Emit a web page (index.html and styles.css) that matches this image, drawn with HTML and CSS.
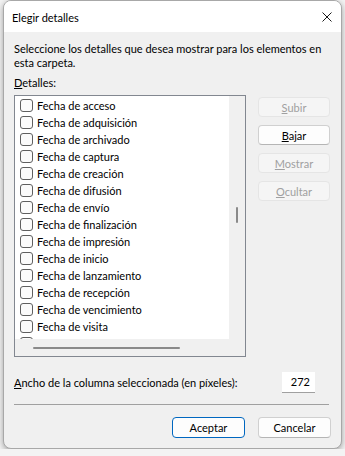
FILE: index.html
```html
<!DOCTYPE html>
<html lang="es">
<head>
    <meta charset="UTF-8">
    <title>Elegir detalles</title>
    <link rel="stylesheet" href="styles.css">
</head>
<body>
    <div class="window">
        <div class="titlebar">
            <span class="title">Elegir detalles</span>
            <span class="close">
                <svg width="10" height="10" viewBox="0 0 10 10">
                    <path d="M0.5 0.5 L9.5 9.5 M9.5 0.5 L0.5 9.5" stroke="#1a1a1a" stroke-width="1" fill="none"/>
                </svg>
            </span>
        </div>

        <div class="content">
            <p class="intro">Seleccione los detalles que desea mostrar para los elementos en esta carpeta.</p>
            <div class="label"><u>D</u>etalles:</div>

            <div class="main">
                <div class="listbox">
                    <div class="items-area">
                        <ul class="items">
                            <li><span class="check"></span>Fecha de acceso</li>
                            <li><span class="check"></span>Fecha de adquisición</li>
                            <li><span class="check"></span>Fecha de archivado</li>
                            <li><span class="check"></span>Fecha de captura</li>
                            <li><span class="check"></span>Fecha de creación</li>
                            <li><span class="check"></span>Fecha de difusión</li>
                            <li><span class="check"></span>Fecha de envío</li>
                            <li><span class="check"></span>Fecha de finalización</li>
                            <li><span class="check"></span>Fecha de impresión</li>
                            <li><span class="check"></span>Fecha de inicio</li>
                            <li><span class="check"></span>Fecha de lanzamiento</li>
                            <li><span class="check"></span>Fecha de recepción</li>
                            <li><span class="check"></span>Fecha de vencimiento</li>
                            <li><span class="check"></span>Fecha de visita</li>
                            <li><span class="check"></span></li>
                        </ul>
                        <div class="vscroll"><div class="vthumb"></div></div>
                    </div>
                    <div class="hscroll"><div class="hthumb"></div></div>
                </div>

                <div class="side-buttons">
                    <button class="btn" disabled><u>S</u>ubir</button>
                    <button class="btn"><u>B</u>ajar</button>
                    <button class="btn" disabled><u>M</u>ostrar</button>
                    <button class="btn" disabled><u>O</u>cultar</button>
                </div>
            </div>

            <div class="width-row">
                <span><u>A</u>ncho de la columna seleccionada (en píxeles):</span>
                <div class="num">272</div>
            </div>

            <div class="sep"></div>

            <div class="footer">
                <button class="btn default">Aceptar</button>
                <button class="btn">Cancelar</button>
            </div>
        </div>
    </div>
</body>
</html>
```

FILE: styles.css
```css
body {
    margin: 0;
    background-color: #f3f3f3;
    font-family: Lato, sans-serif;
    font-size: 11px;
    color: #000;
}
.window {
    box-sizing: border-box;
    width: 339px;
    height: 449px;
    margin-left: 3px;
    background-color: #f0f0f0;
    border: 1px solid #a8a8a8;
    border-radius: 8px;
    overflow: hidden;
    box-shadow: 0px 2px 6px rgba(0, 0, 0, 0.35);
}
.titlebar {
    height: 30px;
    background: white;
    display: flex;
    align-items: center;
    justify-content: space-between;
    padding: 1px 9px 0 8px;
}
.title {
    font-size: 11px;
}
.close {
    display: flex;
    width: 10px;
    height: 10px;
}
.content {
    padding: 10px 10px 0 10px;
}
.intro {
    margin: 0;
    line-height: 14px;
}
.label {
    margin-top: 6px;
    line-height: 14px;
}
.main {
    display: flex;
    gap: 12px;
    margin-top: 5px;
}
.listbox {
    box-sizing: border-box;
    width: 232px;
    height: 262px;
    border: 1px solid #828790;
    background: #f0f0f0;
}
.items-area {
    display: flex;
    height: 243px;
}
.items {
    list-style: none;
    margin: 0;
    padding: 1px 0 0 0;
    width: 214px;
    height: 243px;
    box-sizing: border-box;
    background: white;
    overflow: hidden;
}
.items li {
    display: flex;
    align-items: center;
    height: 17px;
    white-space: nowrap;
}
.check {
    box-sizing: border-box;
    width: 13px;
    height: 13px;
    margin: 0 4px 0 5px;
    border: 1px solid #5f5f5f;
    border-radius: 3px;
    background: #fbfbfb;
    flex-shrink: 0;
}
.vscroll {
    width: 16px;
    position: relative;
}
.vthumb {
    position: absolute;
    left: 7px;
    top: 111px;
    width: 2px;
    height: 16px;
    background: #8a8a8a;
    border-radius: 1px;
}
.hscroll {
    height: 17px;
    position: relative;
}
.hthumb {
    position: absolute;
    left: 18px;
    top: 8px;
    width: 147px;
    height: 2px;
    background: #8a8a8a;
    border-radius: 1px;
}
.side-buttons {
    display: flex;
    flex-direction: column;
    gap: 8px;
    margin-top: 2px;
}
.btn {
    box-sizing: border-box;
    width: 72px;
    height: 20px;
    padding: 0;
    font-family: Lato, sans-serif;
    font-size: 11px;
    color: #000;
    background: #fdfdfd;
    border: 1px solid #d0d0d0;
    border-bottom-color: #b5b5b5;
    border-radius: 4px;
}
.btn:disabled {
    background: #f5f5f5;
    border-color: #e5e5e5;
    color: #a0a0a0;
}
.width-row {
    display: flex;
    justify-content: space-between;
    align-items: center;
    margin-top: 15px;
    padding-right: 16px;
}
.num {
    box-sizing: border-box;
    width: 33px;
    height: 21px;
    background: white;
    border-bottom: 1px solid #a0a0a0;
    text-align: right;
    padding-right: 5px;
    line-height: 20px;
}
.sep {
    height: 1px;
    margin: 11px 2px 0 0;
    background: #a0a0a0;
}
.footer {
    display: flex;
    justify-content: flex-end;
    gap: 13px;
    margin-top: 12px;
}
.footer .btn {
    width: 73px;
    height: 21px;
}
.btn.default {
    border: 1px solid #0067c0;
}
```
